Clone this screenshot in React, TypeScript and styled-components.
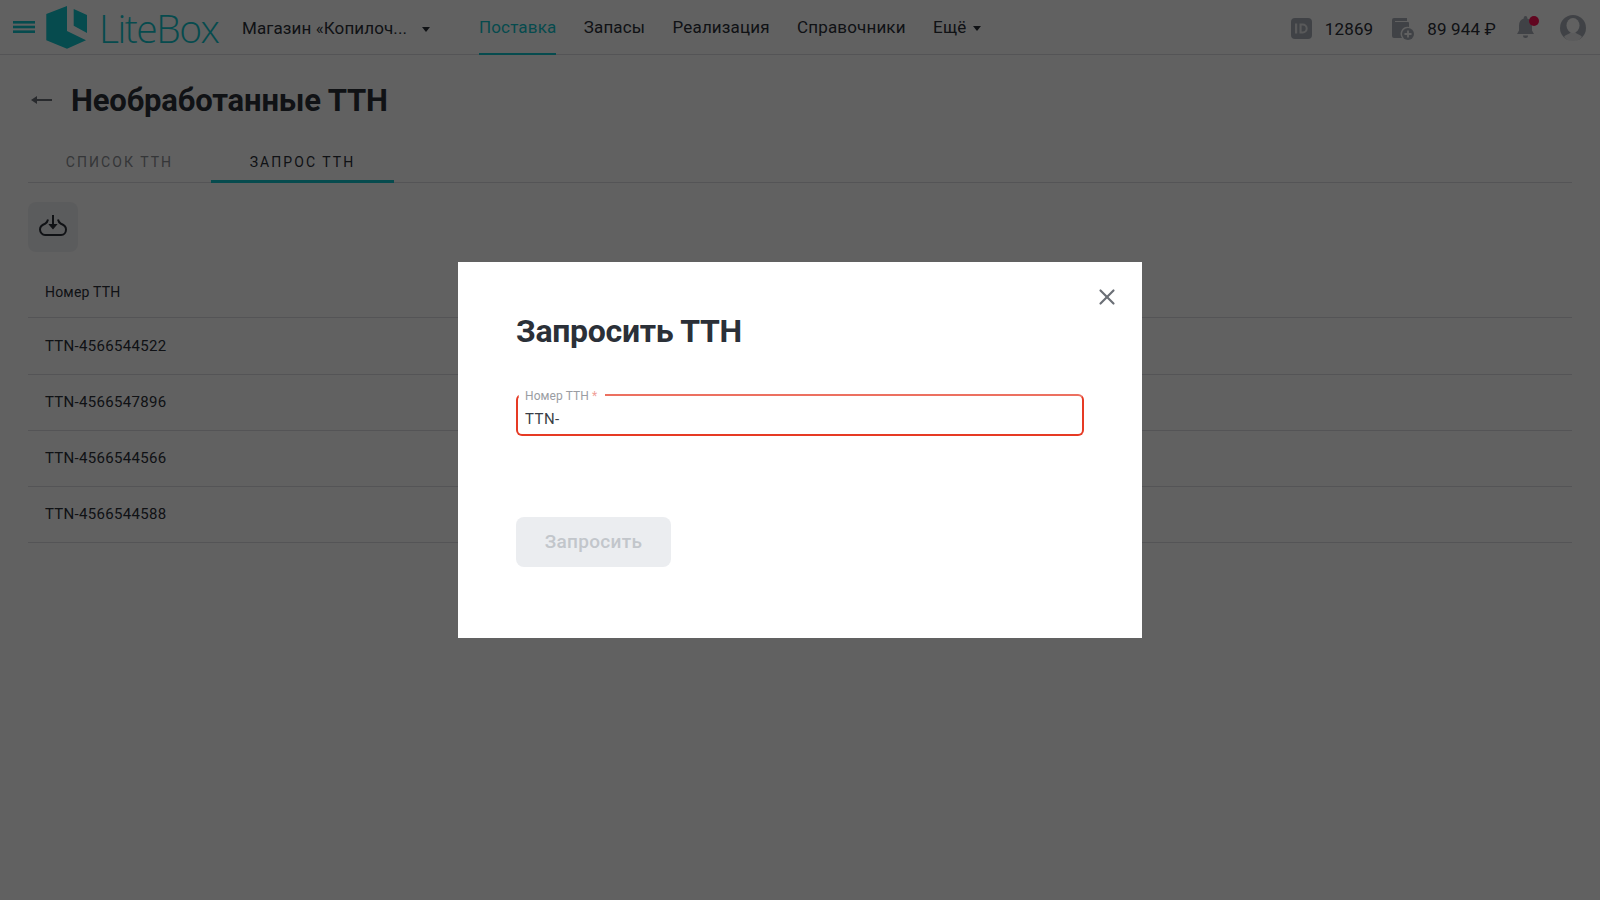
import React from 'react';
import styled, { createGlobalStyle } from 'styled-components';
import { X } from 'lucide-react';

const GlobalStyle = createGlobalStyle`
  html, body {
    margin: 0;
    padding: 0;
    height: 100%;
    background: #fff;
    font-family: Roboto, "Noto Sans", sans-serif;
    overflow: hidden;
  }
  * { box-sizing: border-box; }
`;

const TEAL = '#10c4cc';
const ICON = '#a9aeb8';

const Page = styled.div`
  width: 1600px;
  height: 900px;
  color: #2b3038;
`;

const Header = styled.header`
  height: 55px;
  display: flex;
  align-items: center;
  border-bottom: 1px solid #dcdee2;
  padding: 0 12px;
`;

const Burger = styled.svg`
  width: 22px;
  height: 12px;
  margin-left: 1px;
  flex: none;
`;

const LogoBox = styled.div`
  display: flex;
  align-items: center;
  margin-left: 11px;
  width: 183px;
  flex: none;
`;

const LogoText = styled.span`
  font-family: "Open Sans", sans-serif;
  font-weight: 300;
  font-size: 39px;
  letter-spacing: -1.5px;
  color: ${TEAL};
  margin-left: 12px;
  line-height: 1;
`;

const Shop = styled.div`
  display: flex;
  align-items: center;
  width: 188px;
  margin-left: 13px;
  padding-top: 2px;
  font-size: 17px;
  letter-spacing: 0.1px;
  color: #2b3038;
  justify-content: space-between;
  flex: none;
`;

const Caret = styled.span`
  display: inline-block;
  width: 0;
  height: 0;
  border-left: 4px solid transparent;
  border-right: 4px solid transparent;
  border-top: 5px solid #2b3038;
  margin-top: 3px;
`;

const Nav = styled.nav`
  display: flex;
  align-items: stretch;
  height: 54px;
  gap: 27.4px;
  margin-left: 49px;
`;

const NavItem = styled.a<{ $active?: boolean }>`
  display: flex;
  align-items: center;
  gap: 7px;
  font-size: 17px;
  letter-spacing: 0.15px;
  padding-top: 1px;
  color: ${p => (p.$active ? TEAL : '#2b3038')};
  border-bottom: 2px solid ${p => (p.$active ? TEAL : 'transparent')};
  margin-bottom: -1px;
`;

const HeaderRight = styled.div`
  display: flex;
  align-items: center;
  margin-left: auto;
  padding: 2px 2px 0 0;
`;

const Stat = styled.span<{ $gap: number }>`
  font-size: 17px;
  letter-spacing: 0.15px;
  padding-top: 2px;
  color: #2b3038;
  margin-left: 13px;
  margin-right: ${p => p.$gap}px;
`;

const WalletIcon = styled.svg`
  width: 22px;
  height: 24px;
  margin-top: 2px;
`;

const Bell = styled.div`
  position: relative;
  width: 22px;
  height: 26px;
  margin: 2px 21px 0 0;
`;

const BellDot = styled.span`
  position: absolute;
  top: 0;
  right: 0;
  width: 10px;
  height: 10px;
  border-radius: 50%;
  background: #ff1055;
`;

const Content = styled.main`
  padding: 0 28px;
`;

const TitleRow = styled.div`
  display: flex;
  align-items: center;
  height: 90px;
  padding-left: 3px;
`;

const PageTitle = styled.h1`
  margin: 0 0 0 19px;
  font-size: 31px;
  font-weight: 700;
  letter-spacing: -0.15px;
  color: #2b3038;
`;

const Tabs = styled.div`
  display: flex;
  height: 43px;
  margin-top: -5px;
  border-bottom: 1px solid #dcdee2;
`;

const Tab = styled.div<{ $active?: boolean }>`
  width: 183px;
  text-align: center;
  font-size: 14px;
  letter-spacing: 2.05px;
  line-height: 44px;
  color: ${p => (p.$active ? '#2b3038' : '#8b8e94')};
  border-bottom: ${p => (p.$active ? `3px solid ${TEAL}` : 'none')};
  height: ${p => (p.$active ? '43px' : '42px')};
`;

const IconButton = styled.div`
  width: 50px;
  height: 50px;
  margin-top: 19px;
  padding-bottom: 3px;
  border-radius: 8px;
  background: #f0f1f4;
  display: flex;
  align-items: center;
  justify-content: center;
`;

const Table = styled.div`
  margin-top: 14px;
`;

const Row = styled.div<{ $head?: boolean }>`
  height: ${p => (p.$head ? '52px' : '56px')};
  display: flex;
  align-items: center;
  padding: ${p => (p.$head ? '1px 0 0 17px' : '0 0 1px 17px')};
  border-bottom: 1px solid #dcdee2;
  font-size: ${p => (p.$head ? '14px' : '15px')};
  letter-spacing: ${p => (p.$head ? '0.2px' : '0.3px')};
  color: #2b3038;

  &:nth-child(2) {
    height: 57px;
  }
`;

const Overlay = styled.div`
  position: fixed;
  inset: 0;
  background: rgba(0, 0, 0, 0.62);
  display: flex;
  justify-content: center;
  padding-top: 262px;
`;

const Modal = styled.div`
  position: relative;
  width: 684px;
  height: 376px;
  background: #fff;
  padding: 50px 58px 0;
`;

const CloseButton = styled(X)`
  position: absolute;
  top: 22px;
  right: 22px;
  width: 26px;
  height: 26px;
  color: #6b6f76;
  stroke-width: 2;
`;

const ModalTitle = styled.h2`
  margin: 0;
  font-size: 32px;
  line-height: 38px;
  font-weight: 700;
  letter-spacing: -0.3px;
  color: #2b3038;
`;

const Field = styled.div`
  position: relative;
  margin-top: 44px;
  height: 42px;
  border: 2px solid #e63a24;
  border-top-color: #ec7060;
  border-radius: 6px;
  padding: 13px 7px 0;
  font-size: 15px;
  line-height: 20px;
  letter-spacing: 0.45px;
  color: #3a3f47;
`;

const FieldLabel = styled.label`
  position: absolute;
  top: -7px;
  left: 1px;
  padding: 0 8px 0 6px;
  background: #fff;
  font-size: 12px;
  line-height: 14px;
  letter-spacing: 0.1px;
  color: #9a9da3;
`;

const Required = styled.span`
  color: #f0a097;
`;

const SubmitButton = styled.button`
  display: block;
  margin-top: 81px;
  width: 155px;
  height: 50px;
  padding: 0 0 2px;
  border: none;
  border-radius: 8px;
  background: #ebedf0;
  color: #c2c6cb;
  font-family: Roboto, sans-serif;
  font-size: 19px;
  font-weight: 500;
  letter-spacing: 0.3px;
`;

const ttns = ['TTN-4566544522', 'TTN-4566547896', 'TTN-4566544566', 'TTN-4566544588'];

const App: React.FC = () => (
  <>
    <GlobalStyle />
    <Page>
      <Header>
        <Burger viewBox="0 0 22 12">
          <rect y="0" width="22" height="2.6" fill={TEAL} />
          <rect y="4.7" width="22" height="2.6" fill={TEAL} />
          <rect y="9.4" width="22" height="2.6" fill={TEAL} />
        </Burger>
        <LogoBox>
          <svg width="41" height="43" viewBox="0 0 41 43">
            <path d="M0.3 8 L21 0 L21 25 L40 34.300 L21 42.700 L0.300 34.300 Z" fill={TEAL} />
            <path d="M27.700 3 L41 9 L41 27 L27.700 19.700 Z" fill={TEAL} />
          </svg>
          <LogoText>LiteBox</LogoText>
        </LogoBox>
        <Shop>
          Магазин «Копилоч...
          <Caret />
        </Shop>
        <Nav>
          <NavItem $active>Поставка</NavItem>
          <NavItem>Запасы</NavItem>
          <NavItem>Реализация</NavItem>
          <NavItem>Справочники</NavItem>
          <NavItem>
            Ещё
            <Caret />
          </NavItem>
        </Nav>
        <HeaderRight>
          <svg width="21" height="21" viewBox="0 0 21 21">
            <rect width="21" height="21" rx="4" fill={ICON} />
            <rect x="4" y="5.500" width="2.200" height="10" fill="#fff" fillOpacity=".75" />
            <path d="M8.500 5.500h3.200a5 5 0 0 1 0 10H8.500z M10.600 7.500v6h1.100a3 3 0 0 0 0-6z" fill="#fff" fillOpacity=".75" fillRule="evenodd" />
          </svg>
          <Stat $gap={19}>12869</Stat>
          <WalletIcon viewBox="0 0 22 24">
            <path d="M2 1h13v3H3v1h13a1 1 0 0 1 1 1v4a7 7 0 0 0-7 11H2a2 2 0 0 1-2-2V3a2 2 0 0 1 2-2z" fill={ICON} />
            <circle cx="16" cy="17" r="6" fill={ICON} />
            <path d="M16 13.500v7M12.500 17h7" stroke="#fff" strokeWidth="1.800" />
          </WalletIcon>
          <Stat $gap={21}>89 944 ₽</Stat>
          <Bell>
            <svg width="17" height="24" viewBox="0 0 17 24">
              <path d="M8.500 0a1.800 1.800 0 0 1 1.800 1.800v.7c3 .8 4.700 3.500 4.700 7v5l2 3.500H0l2-3.500v-5c0-3.500 1.700-6.200 4.700-7v-.7A1.800 1.800 0 0 1 8.500 0z" fill={ICON} />
              <path d="M6 19.500h5a2.500 2.500 0 0 1-5 0z" fill={ICON} />
            </svg>
            <BellDot />
          </Bell>
          <svg width="26" height="26" viewBox="0 0 26 26">
            <circle cx="13" cy="13" r="13" fill={ICON} />
            <ellipse cx="13" cy="10.500" rx="6.500" ry="7.500" fill="#fff" />
            <path d="M4 22c2-3 6-3 7-5h4c1 2 5 2 7 5a11.500 11.500 0 0 1-18 0z" fill="#fff" fillOpacity=".8" />
          </svg>
        </HeaderRight>
      </Header>
      <Content>
        <TitleRow>
          <svg width="21" height="10" viewBox="0 0 21 10">
            <path d="M21 5H2" fill="none" stroke="#6b6f76" strokeWidth="2" />
            <path d="M0 5l6-4v8z" fill="#6b6f76" />
          </svg>
          <PageTitle>Необработанные ТТН</PageTitle>
        </TitleRow>
        <Tabs>
          <Tab>СПИСОК ТТН</Tab>
          <Tab $active>ЗАПРОС ТТН</Tab>
        </Tabs>
        <IconButton>
          <svg width="28" height="21" viewBox="0 0 28 21" fill="none" stroke="#2b3038" strokeWidth="2">
            <path d="M9 4.500C8.500 7 7.500 8 6 8.800 3 10 1 11.500 1 14.500 1 17.500 3.500 20 6 20h16c3 0 5-2.500 5-5.500 0-3-2-4.500-5-5.700-1.500-.8-2.500-1.800-3-4.300" />
            <path d="M14 0v10" />
            <path d="M11.500 10 14 13l2.500-3z" fill="#2b3038" />
          </svg>
        </IconButton>
        <Table>
          <Row $head>Номер ТТН</Row>
          {ttns.map(t => (
            <Row key={t}>{t}</Row>
          ))}
        </Table>
      </Content>
    </Page>
    <Overlay>
      <Modal>
        <CloseButton />
        <ModalTitle>Запросить ТТН</ModalTitle>
        <Field>
          <FieldLabel>
            Номер ТТН <Required>*</Required>
          </FieldLabel>
          TTN-
        </Field>
        <SubmitButton disabled>Запросить</SubmitButton>
      </Modal>
    </Overlay>
  </>
);

export default App;
